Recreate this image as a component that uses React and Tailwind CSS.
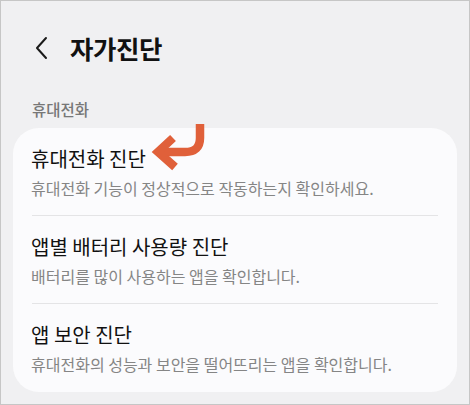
import React from 'react';

const items = [
  { title: '휴대전화 진단', desc: '휴대전화 기능이 정상적으로 작동하는지 확인하세요.' },
  { title: '앱별 배터리 사용량 진단', desc: '배터리를 많이 사용하는 앱을 확인합니다.' },
  { title: '앱 보안 진단', desc: '휴대전화의 성능과 보안을 떨어뜨리는 앱을 확인합니다.' },
];

function BackIcon() {
  return (
    <svg width="14" height="24" viewBox="0 0 14 24" fill="none">
      <path d="M11 2 L2 12 L11 22" stroke="#1a1a1a" strokeWidth="2" strokeLinecap="round" strokeLinejoin="round" />
    </svg>
  );
}

function PointerArrow() {
  return (
    <svg className="absolute left-0 top-0" width="470" height="405" viewBox="0 0 470 405" fill="none">
      <path d="M199 123 V137 Q199 151 184 151 H162" stroke="#e0603a" strokeWidth="8.5" />
      <path d="M172 137 L157 151 L174 166" stroke="#e0603a" strokeWidth="8.5" strokeLinejoin="miter" />
    </svg>
  );
}

export default function App() {
  return (
    <div
      className="relative h-[405px] w-[470px] overflow-hidden border border-[#c6c6c6] bg-[#f0f0f2]"
      style={{ fontFamily: '"Noto Sans CJK KR", "Noto Sans", sans-serif' }}
    >
      <div className="flex h-[92px] items-center pl-[34px] pt-[1px]">
        <BackIcon />
        <h1 className="ml-[21px] text-[25.5px] font-bold leading-none tracking-[-0.5px] text-[#111]">자가진단</h1>
      </div>
      <div className="mt-[6px] pl-[31px] text-[15.5px] font-medium leading-[20px] text-[#777]">휴대전화</div>
      <div className="mx-[12px] mt-[9px] rounded-[26px] bg-[#fbfbfd] pb-[1px]">
        {items.map((item, i) => (
          <div key={item.title}>
            <div className="h-[87px] px-[18px] pt-[18px]">
              <div className="text-[20px] leading-[26px] text-[#111]">{item.title}</div>
              <div className="mt-[6px] text-[16px] leading-[20px] text-[#858585]">{item.desc}</div>
            </div>
            {i < items.length - 1 && <div className="mx-[19px] h-px bg-[#e4e4e6]" />}
          </div>
        ))}
      </div>
      <PointerArrow />
    </div>
  );
}
